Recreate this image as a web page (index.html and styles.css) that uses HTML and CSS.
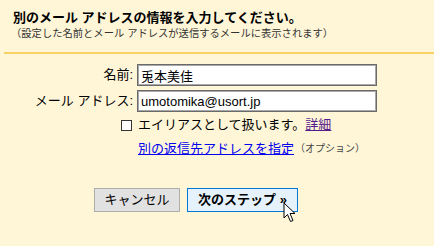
FILE: index.html
```html
<!DOCTYPE html>
<html lang="ja">
    <head>
        <meta charset="UTF-8">
        <title>別のメール アドレスの情報を入力</title>
        <link rel="stylesheet" href="styles.css">
    </head>
    <body>
        <div class="header">
            <h1>別のメール アドレスの情報を入力してください。</h1>
            <p>（設定した名前とメール アドレスが送信するメールに表示されます）</p>
        </div>
        <div class="divider"></div>

        <form class="address-form">
            <label for="name">名前:</label>
            <input type="text" id="name" value="兎本美佳">
            <label for="email">メール アドレス:</label>
            <input type="text" id="email" value="umotomika@usort.jp">

            <div class="options">
                <div class="alias-row">
                    <span class="check"></span>
                    <span>エイリアスとして扱います。</span><a href="#" class="visited">詳細</a>
                </div>
                <div class="reply-row">
                    <a href="#">別の返信先アドレスを指定</a>
                    <span class="note">（オプション）</span>
                </div>
            </div>
        </form>

        <div class="actions">
            <button type="button" class="btn-cancel">キャンセル</button>
            <button type="button" class="btn-next">次のステップ &raquo;
                <svg class="cursor" width="14" height="21" viewBox="0 0 14 21">
                    <path d="M1 1 L1 16 L4.5 12.5 L7.5 19.5 L10 18.5 L7 11.5 L12 11.5 Z" fill="#fff" stroke="#000" stroke-width="1" stroke-linejoin="miter"/>
                </svg>
            </button>
        </div>
    </body>
</html>
```

FILE: styles.css
```css
* {
    margin: 0;
    padding: 0;
    box-sizing: border-box;
}

body {
    background-color: #fff6d8;
    color: #000;
    font-family: 'Liberation Sans', 'Noto Sans CJK JP', sans-serif;
    font-size: 13px;
    width: 434px;
    height: 246px;
    overflow: hidden;
}

.header {
    padding: 10px 0 0 13px;
}

.header h1 {
    font-size: 13px;
    font-weight: bold;
    line-height: 16px;
}

.header p {
    font-size: 10.3px;
    line-height: 16px;
    color: #333;
    margin-left: -2px;
}

.divider {
    margin: 10px 0 0 4px;
    border-top: 2px solid #f8d264;
}

.address-form {
    display: grid;
    grid-template-columns: 133px 240px;
    column-gap: 4px;
    row-gap: 4px;
    margin-top: 10px;
}

.address-form label {
    text-align: right;
    line-height: 22px;
    white-space: nowrap;
}

.address-form input {
    height: 22px;
    border: 1px solid #6a6a6a;
    box-shadow: inset 0 0 0 1px #a8a8a8;
    background: #fff;
    padding: 0 3px;
    font-family: 'Liberation Sans', 'Noto Sans CJK JP', sans-serif;
    font-size: 13px;
    color: #000;
    outline: none;
}

.options {
    grid-column: 1 / 3;
    padding-left: 121px;
}

.alias-row {
    display: flex;
    align-items: center;
    height: 18px;
    line-height: 18px;
}

.check {
    width: 11px;
    height: 11px;
    border: 1px solid #333;
    background: #fff;
    margin-right: 6px;
}

a {
    color: #0000ee;
    text-decoration: underline;
}

a.visited {
    color: #551a8b;
}

.reply-row {
    display: flex;
    align-items: center;
    height: 18px;
    margin-top: 6px;
    padding-left: 17px;
    line-height: 18px;
}

.note {
    font-size: 10px;
    color: #444;
    margin-left: 1px;
}

.actions {
    display: flex;
    gap: 7px;
    margin: 30px 0 0 94px;
}

.actions button {
    height: 24px;
    font-family: 'Liberation Sans', 'Noto Sans CJK JP', sans-serif;
    font-size: 13px;
    color: #000;
    line-height: 20px;
    cursor: pointer;
}

.btn-cancel {
    width: 86px;
    background: #e1e1e1;
    border: 1px solid #adadad;
}

.btn-next {
    position: relative;
    width: 111px;
    background: #e5f1fb;
    border: 1px solid #0078d7;
    font-weight: bold;
}

.cursor {
    position: absolute;
    left: 95px;
    top: 13px;
}
```
